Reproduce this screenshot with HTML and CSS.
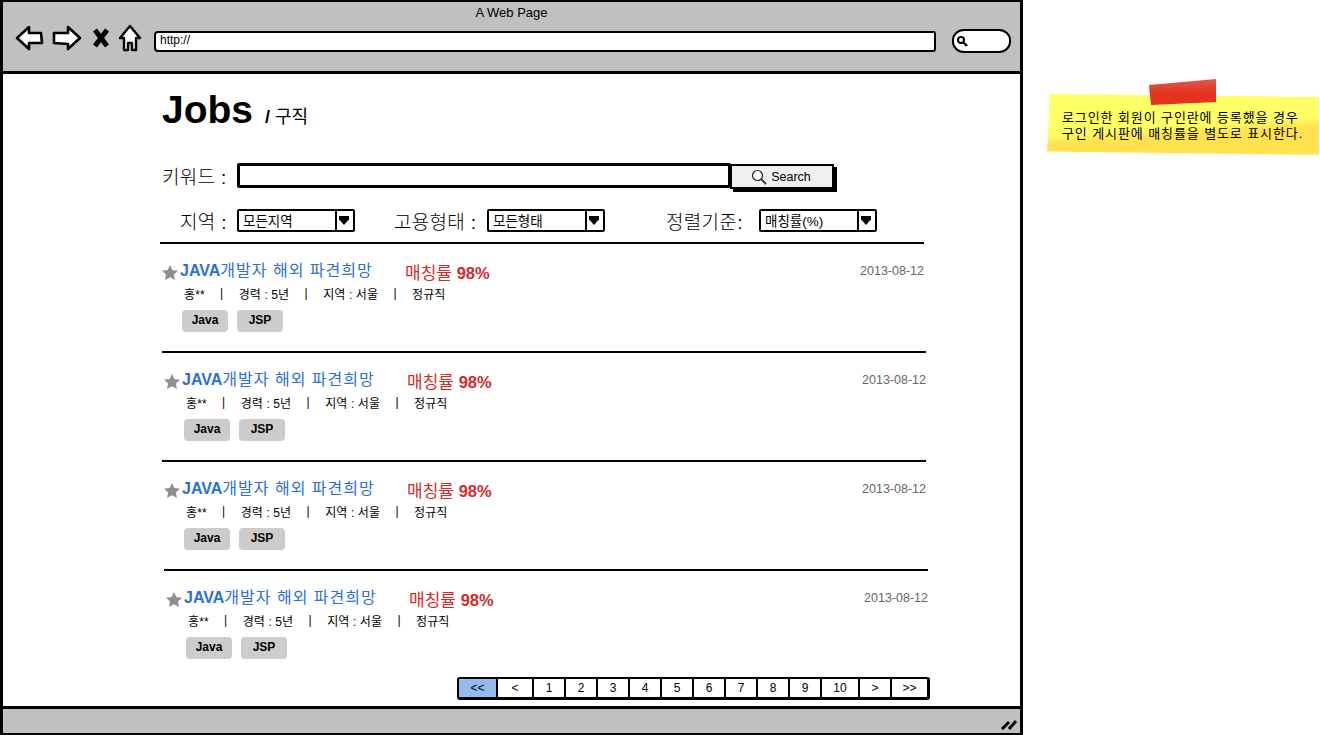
FILE: index.html
```html
<!DOCTYPE html>

<html>
    <head>
        <meta charset="utf-8">
        <title>Jobs</title>
        <link rel="stylesheet" href="styles.css">
    </head>

    <body>
        <div class="page">
            <div class="window">
                <div class="toolbar">
                    <div class="win-title">A Web Page</div>
                    <div class="nav">
                        <svg class="nav-back" width="29" height="26" viewBox="0 0 29 26"><path d="M14 2 L2 13 L14 24 L14 18 L27 18 L26 8 L14 8 Z" fill="#fff" stroke="#000" stroke-width="2.6" stroke-linejoin="round"/></svg>
                        <svg class="nav-forward" width="30" height="26" viewBox="0 0 30 26"><path d="M16 2 L28 13 L16 24 L16 19 L2 18 L2 8 L16 8 Z" fill="#fff" stroke="#000" stroke-width="2.6" stroke-linejoin="round"/></svg>
                        <svg class="nav-stop" width="18" height="22" viewBox="0 0 18 22"><path d="M3 3 L15 19 M15 3 L3 19" fill="none" stroke="#000" stroke-width="5"/></svg>
                        <svg class="nav-home" width="24" height="28" viewBox="0 0 24 28"><path d="M12 2 L2 14 L6 14 L6 26 L10 26 L10 19 L14 19 L14 26 L18 26 L18 14 L22 14 Z" fill="#fff" stroke="#000" stroke-width="2.4" stroke-linejoin="round"/></svg>
                        <div class="url">http://</div>
                        <div class="oval">
                            <svg width="12" height="12" viewBox="0 0 12 12"><circle cx="5" cy="5" r="3" fill="none" stroke="#000" stroke-width="2"/><path d="M7 7 L11 11" stroke="#000" stroke-width="2.4"/></svg>
                        </div>
                    </div>
                </div>

                <div class="content">
                    <h1 class="heading">Jobs <small><b>/</b> 구직</small></h1>

                    <div class="search">
                        <label class="lbl">키워드 <b>:</b></label>
                        <div class="search-box"></div>
                        <div class="search-btn">
                            <svg width="16" height="16" viewBox="0 0 16 16"><circle cx="6.5" cy="6.5" r="5" fill="#fff" stroke="#222" stroke-width="1.2"/><path d="M10 10 L15 15" stroke="#444" stroke-width="2"/></svg>
                            Search
                        </div>
                    </div>

                    <div class="filters">
                        <label class="lbl lbl-area">지역 <b>:</b></label>
                        <div class="sel"><span>모든지역</span><i></i></div>
                        <label class="lbl lbl-type">고용형태 <b>:</b></label>
                        <div class="sel"><span>모든형태</span><i></i></div>
                        <label class="lbl lbl-sort">정렬기준<b>:</b></label>
                        <div class="sel"><span>매칭률(%)</span><i></i></div>
                    </div>

                    <div class="job job-a">
                        <div class="job-top">
                            <svg class="star" width="16" height="15" viewBox="0 0 16 15"><path d="M8 0 L10.4 5 L16 5.7 L11.9 9.4 L13 15 L8 12.2 L3 15 L4.1 9.4 L0 5.7 L5.6 5 Z" fill="#8f8f8f"/></svg>
                            <a class="job-title"><b>JAVA</b>개발자 해외 파견희망</a>
                            <span class="match">매칭률 <b>98%</b></span>
                            <span class="date">2013-08-12</span>
                        </div>
                        <div class="meta"><span>홍**</span><em>|</em><span>경력 : 5년</span><em>|</em><span>지역 : 서울</span><em>|</em><span>정규직</span></div>
                        <div class="tags"><span>Java</span><span>JSP</span></div>
                    </div>
                    <div class="job job-b">
                        <div class="job-top">
                            <svg class="star" width="16" height="15" viewBox="0 0 16 15"><path d="M8 0 L10.4 5 L16 5.7 L11.9 9.4 L13 15 L8 12.2 L3 15 L4.1 9.4 L0 5.7 L5.6 5 Z" fill="#8f8f8f"/></svg>
                            <a class="job-title"><b>JAVA</b>개발자 해외 파견희망</a>
                            <span class="match">매칭률 <b>98%</b></span>
                            <span class="date">2013-08-12</span>
                        </div>
                        <div class="meta"><span>홍**</span><em>|</em><span>경력 : 5년</span><em>|</em><span>지역 : 서울</span><em>|</em><span>정규직</span></div>
                        <div class="tags"><span>Java</span><span>JSP</span></div>
                    </div>
                    <div class="job job-b">
                        <div class="job-top">
                            <svg class="star" width="16" height="15" viewBox="0 0 16 15"><path d="M8 0 L10.4 5 L16 5.7 L11.9 9.4 L13 15 L8 12.2 L3 15 L4.1 9.4 L0 5.7 L5.6 5 Z" fill="#8f8f8f"/></svg>
                            <a class="job-title"><b>JAVA</b>개발자 해외 파견희망</a>
                            <span class="match">매칭률 <b>98%</b></span>
                            <span class="date">2013-08-12</span>
                        </div>
                        <div class="meta"><span>홍**</span><em>|</em><span>경력 : 5년</span><em>|</em><span>지역 : 서울</span><em>|</em><span>정규직</span></div>
                        <div class="tags"><span>Java</span><span>JSP</span></div>
                    </div>
                    <div class="job job-c">
                        <div class="job-top">
                            <svg class="star" width="16" height="15" viewBox="0 0 16 15"><path d="M8 0 L10.4 5 L16 5.7 L11.9 9.4 L13 15 L8 12.2 L3 15 L4.1 9.4 L0 5.7 L5.6 5 Z" fill="#8f8f8f"/></svg>
                            <a class="job-title"><b>JAVA</b>개발자 해외 파견희망</a>
                            <span class="match">매칭률 <b>98%</b></span>
                            <span class="date">2013-08-12</span>
                        </div>
                        <div class="meta"><span>홍**</span><em>|</em><span>경력 : 5년</span><em>|</em><span>지역 : 서울</span><em>|</em><span>정규직</span></div>
                        <div class="tags"><span>Java</span><span>JSP</span></div>
                    </div>

                    <div class="pager">
                        <span class="on">&lt;&lt;</span><span class="prev">&lt;</span><span>1</span><span>2</span><span>3</span><span>4</span><span>5</span><span>6</span><span>7</span><span>8</span><span>9</span><span class="ten">10</span><span>&gt;</span><span>&gt;&gt;</span>
                    </div>
                </div>

                <div class="statusbar">
                    <svg width="16" height="14" viewBox="0 0 16 14"><path d="M1 12 L8 5 M8 12 L15 4" stroke="#000" stroke-width="3" fill="none"/></svg>
                </div>
            </div>

            <div class="note">
                <div class="tape"></div>
                <p>로그인한 회원이 구인란에 등록했을 경우<br>구인 게시판에 매칭률을 별도로 표시한다.</p>
            </div>
        </div>
    </body>
</html>
```

FILE: styles.css
```css
* {
    box-sizing: border-box;
}

body {
    margin: 0;
    font-family: "Liberation Sans", "Noto Sans CJK KR", sans-serif;
    color: #000;
    background: #fff;
    overflow: hidden;
}

.page {
    display: flex;
    align-items: flex-start;
    width: 1320px;
    height: 735px;
}

.window {
    display: flex;
    flex-direction: column;
    width: 1023px;
    height: 735px;
    border: 3px solid #000;
    border-bottom-width: 2px;
    border-top-width: 2px;
}

.toolbar {
    height: 72px;
    padding-top: 4px;
    background: #c0c0c0;
    border-bottom: 3px solid #000;
}

.win-title {
    font-size: 13px;
    line-height: 14px;
    text-align: center;
}

.nav {
    display: flex;
    align-items: center;
    height: 28px;
    margin-top: 4px;
    padding-left: 12px;
}

.nav-back {
    margin-right: 8px;
}

.nav-forward {
    margin-right: 10px;
}

.nav-stop {
    margin-right: 8px;
}

.nav-home {
    margin-right: 12px;
}

.url {
    align-self: flex-start;
    width: 782px;
    height: 21px;
    margin-top: 7px;
    padding-left: 4px;
    font-size: 12px;
    line-height: 15px;
    background: #fff;
    border: 2.5px solid #000;
    border-radius: 4px 2px 3px 4px;
}

.oval {
    align-self: flex-start;
    display: flex;
    align-items: center;
    width: 59px;
    height: 24px;
    margin: 5px 0 0 16px;
    padding-left: 2px;
    background: #fff;
    border: 2.5px solid #000;
    border-radius: 12px / 11px;
}

.content {
    flex: 1;
    padding-top: 14px;
}

.heading {
    margin: 0 0 0 159px;
    font-size: 39px;
    line-height: 44px;
    font-weight: bold;
}

.heading small {
    font-size: 18px;
    font-weight: normal;
    margin-left: 1px;
}

.lbl {
    font-size: 19px;
    letter-spacing: 0.3px;
    font-weight: 300;
    white-space: nowrap;
}

.search {
    display: flex;
    align-items: flex-start;
    height: 46px;
    margin: 24px 0 0 159px;
}

.search .lbl {
    width: 75px;
    line-height: 29px;
}

.search-box {
    width: 494px;
    height: 25px;
    border: 3px solid #000;
    border-radius: 2px;
}

.search-btn {
    display: flex;
    align-items: center;
    justify-content: center;
    gap: 4px;
    width: 104px;
    height: 25px;
    margin: 1px 0 0 -1px;
    padding-right: 2px;
    font-size: 12.5px;
    background: #f0f0f0;
    border: 2px solid #000;
    box-shadow: 3px 3px 0 #000;
}

.filters {
    display: flex;
    align-items: center;
    height: 23px;
    margin-left: 177px;
}

.lbl-area {
    width: 57px;
}

.lbl-type {
    width: 93px;
    margin-left: 39px;
}

.lbl-sort {
    width: 93px;
    margin-left: 61px;
}

.sel {
    display: flex;
    justify-content: space-between;
    width: 118px;
    height: 23px;
    font-size: 13.5px;
    line-height: 21px;
    border: 2px solid #000;
    border-radius: 2px;
}

.sel span {
    padding-left: 4px;
}

.sel i {
    position: relative;
    width: 18px;
    border-left: 2px solid #000;
}

.sel i::after {
    content: "";
    position: absolute;
    left: 2px;
    top: 5px;
    width: 10px;
    height: 9px;
    background: #000;
    clip-path: polygon(0 0, 100% 0, 100% 35%, 50% 100%, 0 35%);
}

.job {
    height: 109px;
    width: 764px;
    border-top: 2px solid #000;
}

.job-a {
    margin: 10px 0 0 157px;
}

.job-b {
    margin-left: 159px;
}

.job-c {
    margin-left: 161px;
}

.job-top {
    display: flex;
    align-items: center;
    height: 24px;
    margin-top: 15px;
}

.star {
    margin: 2px 2px 0 2px;
}

.job-title {
    width: 225px;
    font-size: 16px;
    letter-spacing: 1px;
    line-height: 22px;
    color: #2a70d8;
    white-space: nowrap;
}

.job-title b {
    font-weight: bold;
    letter-spacing: 0;
}

.match {
    font-size: 17px;
    color: #d42a2a;
    white-space: nowrap;
}

.match b {
    font-size: 16.5px;
    font-weight: bold;
}

.date {
    margin-left: auto;
    font-size: 12.5px;
    color: #666;
}

.meta {
    display: flex;
    align-items: center;
    height: 16px;
    margin: 2px 0 0 24px;
    font-size: 12px;
    letter-spacing: 0.1px;
    white-space: nowrap;
}

.meta em {
    width: 34px;
    font-style: normal;
    text-align: center;
}

.tags {
    display: flex;
    gap: 9px;
    margin: 9px 0 0 22px;
}

.tags span {
    width: 46px;
    height: 22px;
    font-size: 12px;
    font-weight: bold;
    line-height: 20px;
    text-align: center;
    background: #ccc;
    border-radius: 4px;
}

.pager {
    display: flex;
    width: 473px;
    height: 23px;
    margin: -1px 0 0 454px;
    font-size: 12px;
    line-height: 19px;
    text-align: center;
    background: #fff;
    border: 2px solid #000;
    border-bottom-width: 3px;
    border-right-width: 3px;
    border-radius: 3px;
}

.pager span {
    flex: 0 0 32px;
    border-right: 2px solid #000;
}

.pager span:last-child {
    flex: 1;
    border-right: 0;
}

.pager .on {
    flex-basis: 39px;
    background: #94bbef;
}

.pager .prev {
    flex-basis: 36px;
}

.pager .ten {
    flex-basis: 38px;
}

.statusbar {
    display: flex;
    align-items: flex-end;
    justify-content: flex-end;
    height: 27px;
    padding: 0 3px 2px 0;
    background: #c0c0c0;
    border-top: 3px solid #000;
}

/* sticky note sits on the free canvas right of the window */
.note {
    position: relative;
    width: 272px;
    height: 64px;
    margin: 92px 0 0 24px;
}

.note::before {
    content: "";
    position: absolute;
    inset: 0;
    background: linear-gradient(176deg, #ffff66 52%, #ffe24e 64%);
    clip-path: polygon(1% 3%, 100% 8%, 100% 98%, 0 93%);
}

.note p {
    position: relative;
    margin: 0;
    padding: 18px 0 0 15px;
    font-size: 13px;
    letter-spacing: 0.9px;
    line-height: 16px;
    white-space: nowrap;
}

.tape {
    position: absolute;
    left: 102px;
    top: -13px;
    width: 67px;
    height: 26px;
    background: linear-gradient(#df5a50, #e4321f 55%);
    clip-path: polygon(0 23%, 100% 0, 100% 88%, 3% 100%);
}
```
